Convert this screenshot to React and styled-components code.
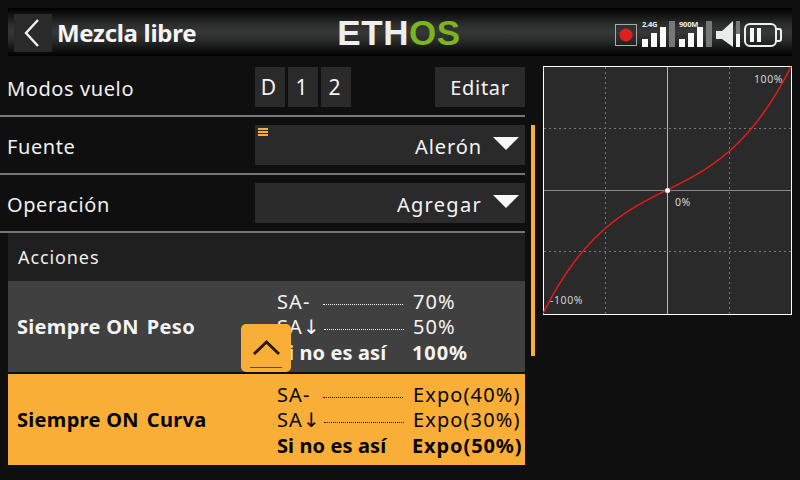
import React from "react";
import styled, { createGlobalStyle } from "styled-components";

const Global = createGlobalStyle`
  html, body { margin: 0; padding: 0; background: #0f0f0f; }
  body { width: 800px; height: 480px; overflow: hidden; font-family: "Noto Sans", "DejaVu Sans", sans-serif; }
`;
const Screen = styled.div`
  position: relative; width: 800px; height: 480px; background: #0f0f0f; color: #f4f4f4;
  display: flex; flex-direction: column; overflow: hidden; padding-top: 8px; box-sizing: border-box;
`;
const Header = styled.header`
  height: 48px; margin: 0 8px; display: grid; grid-template-columns: 1fr auto 1fr; align-items: center;
  background: linear-gradient(#000 0%, #0a0a0a 8%, #2c2e2e 35%, #363838 50%, #2c2e2e 65%, #0a0a0a 92%, #000 100%);
`;
const HeaderLeft = styled.div`display: flex; align-items: center; padding-left: 6px;`;
const BackButton = styled.div`
  width: 38px; height: 38px; background: #2a2a2a; display: flex; align-items: center; justify-content: center;
`;
const Title = styled.h1`
  margin: 0 0 0 5px; font-size: 24px; font-weight: 700; line-height: 38px; color: #f6f6f6; letter-spacing: -0.3px;
`;
const Logo = styled.div`
  font-family: "Liberation Sans", sans-serif; font-weight: 700; font-size: 35px; line-height: 48px; letter-spacing: 0.6px;
  color: #eeeeee; padding-top: 1px; margin-left: -2px;
  & > span { color: #7ab51d; }
`;
const Status = styled.div`justify-self: end; height: 48px;`;
const Main = styled.main`
  display: grid; grid-template-columns: 525px 10px 8px 249px; margin-top: 10px; flex: 1; min-height: 0;
`;
const Form = styled.section`display: flex; flex-direction: column; padding-top: 1px;`;
const Row = styled.div`
  height: 40px; display: grid; grid-template-columns: 255px 1fr; grid-template-rows: 40px; align-items: center; padding-bottom: 8px;
`;
const Label = styled.div`
  height: 40px; font-size: 20px; line-height: 44px; padding-left: 7px; letter-spacing: 0.6px; color: #f0f0f0;
`;
const Separator = styled.div`height: 2px; background: #777; margin-bottom: 8px;`;
const Controls = styled.div`display: flex; gap: 3px;`;
const Chip = styled.div`
  width: 30px; height: 40px; box-sizing: border-box; padding-right: 3px; background: #2a2a2a;
  display: flex; align-items: center; justify-content: center; font-size: 21px; color: #f4f4f4;
`;
const EditButton = styled.div`
  width: 90px; height: 40px; margin-left: auto; background: #2a2a2a; display: flex; align-items: center; justify-content: center;
  font-size: 20px; letter-spacing: 0.7px; color: #f4f4f4;
`;
const Select = styled.div`
  position: relative; height: 40px; box-sizing: border-box; padding: 2px 6px 0 0; background: #2a2a2a;
  display: flex; align-items: center; justify-content: flex-end; gap: 11px;
  font-size: 20px; letter-spacing: ${p => p.$spacing}; color: #f4f4f4;
`;
const Caret = styled.span`
  width: 0; height: 0; border-left: 13px solid transparent; border-right: 13px solid transparent;
  border-top: 13px solid #f8f8f8; margin-bottom: 6px;
`;
const MenuMark = styled.span`
  position: absolute; left: 3px; top: 3px; width: 10px; height: 8px;
  background: repeating-linear-gradient(#f9ae37 0 2px, transparent 2px 3px);
`;
const SectionTitle = styled.div`
  height: 48px; margin: -8px 0 0 8px; background: #1f1f1f; display: flex; align-items: center; padding-left: 10px;
  font-size: 18px; letter-spacing: 0.9px; color: #f0f0f0;
`;
const Action = styled.div`
  height: 91px; margin: 0 0 2px 8px; box-sizing: border-box;
  background: ${p => (p.$active ? "#f9ae37" : "#404040")};
  color: ${p => (p.$active ? "#050505" : "#f4f4f4")};
  display: grid; grid-template-columns: 260px 1fr; align-items: center; padding-left: 9px;
`;
const ActionName = styled.div`
  display: flex; gap: 8px; font-size: 20px; font-weight: 700; letter-spacing: 0.3px; white-space: nowrap;
`;
const Lines = styled.div`display: flex; flex-direction: column; padding-bottom: 1px;`;
const Line = styled.div`
  height: 25.5px; display: grid; grid-template-columns: 46px 80px 1fr; align-items: center; white-space: nowrap;
  font-size: 20px; letter-spacing: 1.1px;
`;
const Dots = styled.span`
  height: 6px; position: relative; left: ${p => (p.$shift ? "1px" : "0")};
  border-bottom: 1px dotted currentColor;
`;
const Value = styled.span`padding-left: 10px;`;
const BoldLine = styled.div`
  height: 25.5px; display: grid; grid-template-columns: 135px 1fr; align-items: center; white-space: nowrap;
  font-size: 20px; font-weight: 700; letter-spacing: 0.1px;
`;
const BoldValue = styled.span`letter-spacing: 0.9px;`;
const ScrollTrack = styled.div`padding-top: 59px; grid-column: 2; display: flex; justify-content: flex-end;`;
const ScrollThumb = styled.div`width: 4px; height: 231px; background: #f9ae37;`;
const Graph = styled.svg`grid-column: 4; display: block; width: 249px; height: 249px;`;
const GraphText = styled.text`font-family: "Noto Sans", sans-serif; font-size: 10.5px; fill: #d4d4d4; letter-spacing: 0.6px;`;
const UpButton = styled.div`
  position: absolute; left: 241px; top: 324px; width: 50px; height: 48px; border-radius: 5px; background: #f9ae37;
  display: flex; align-items: center; justify-content: center;
`;

const curve = () => {
  const pts = [];
  for (let i = 0; i <= 200; i++) {
    const x = -1 + i / 100;
    const y = 0.5 * x * x * x + 0.5 * x;
    pts.push(`${(124 + x * 124).toFixed(2)},${(124 - y * 123.5).toFixed(2)}`);
  }
  return pts.join(" ");
};

const Signal = ({ x, label }) => (
  <g>
    <text x={x} y={18} fontFamily="Noto Sans, sans-serif" fontSize="7.5" fontWeight="700" fill="#eee" letterSpacing="-0.2">{label}</text>
    <rect x={x} y={30} width={6} height={8} fill="#fafafa" />
    <rect x={x + 9} y={24} width={6} height={14} fill="#fafafa" />
    <rect x={x + 18} y={18} width={6} height={20} fill="#fafafa" />
    <rect x={x + 27} y={12} width={6} height={26} fill="#777" />
  </g>
);

export default function App() {
  return (
    <Screen>
      <Global />
      <Header>
        <HeaderLeft>
          <BackButton>
            <svg width="20" height="30" viewBox="0 0 20 30">
              <path d="M15 2 L3 15 L15 28" fill="none" stroke="#f2f2f2" strokeWidth="2.4" />
            </svg>
          </BackButton>
          <Title>Mezcla libre</Title>
        </HeaderLeft>
        <Logo>ETH<span>OS</span></Logo>
        <Status>
          <svg width="178" height="48" viewBox="614 0 178 48" style={{ display: "block" }}>
            <rect x="615.5" y="15.5" width="21" height="21" fill="none" stroke="#aaa" />
            <circle cx="626" cy="26" r="6.5" fill="#e21e1e" />
            <Signal x={642} label="2.4G" />
            <Signal x={679} label="900M" />
            <path d="M716 22 L722 22 L733 12 L733 38 L722 30 L716 30 Z" fill="#e8ece8" />
            <rect x="736" y="12" width="4" height="26" fill="#777" />
            <rect x="736" y="25" width="4" height="13" fill="#fafafa" />
            <rect x="745" y="15" width="31" height="22" rx="5" fill="none" stroke="#eee" strokeWidth="2" />
            <path d="M776 20 h3 a2 2 0 0 1 2 2 v8 a2 2 0 0 1 -2 2 h-3" fill="none" stroke="#eee" strokeWidth="2" />
            <rect x="750" y="19" width="4" height="14" fill="#f6f6f6" />
            <rect x="757" y="19" width="4" height="14" fill="#f6f6f6" />
          </svg>
        </Status>
      </Header>
      <Main>
        <Form>
          <Row>
            <Label>Modos vuelo</Label>
            <Controls>
              <Chip>D</Chip><Chip>1</Chip><Chip>2</Chip>
              <EditButton>Editar</EditButton>
            </Controls>
          </Row>
          <Separator />
          <Row>
            <Label>Fuente</Label>
            <Select $spacing="0.9px"><MenuMark />Alerón<Caret /></Select>
          </Row>
          <Separator />
          <Row>
            <Label>Operación</Label>
            <Select $spacing="1.3px">Agregar<Caret /></Select>
          </Row>
          <Separator />
          <SectionTitle>Acciones</SectionTitle>
          <Action>
            <ActionName><span>Siempre ON</span><span>Peso</span></ActionName>
            <Lines>
              <Line>SA-<Dots /><Value>70%</Value></Line>
              <Line>SA↓<Dots $shift /><Value>50%</Value></Line>
              <BoldLine>Si no es así<BoldValue>100%</BoldValue></BoldLine>
            </Lines>
          </Action>
          <Action $active>
            <ActionName><span>Siempre ON</span><span>Curva</span></ActionName>
            <Lines>
              <Line>SA-<Dots /><Value>Expo(40%)</Value></Line>
              <Line>SA↓<Dots $shift /><Value>Expo(30%)</Value></Line>
              <BoldLine>Si no es así<BoldValue>Expo(50%)</BoldValue></BoldLine>
            </Lines>
          </Action>
        </Form>
        <ScrollTrack><ScrollThumb /></ScrollTrack>
        <Graph viewBox="0 0 249 249">
          <rect x="0.5" y="0.5" width="248" height="248" fill="#2a2a2a" stroke="#fff" />
          <g stroke="#777" strokeDasharray="2 3">
            <line x1="62.5" y1="1" x2="62.5" y2="248" />
            <line x1="186.5" y1="1" x2="186.5" y2="248" />
            <line x1="1" y1="62.5" x2="248" y2="62.5" />
            <line x1="1" y1="185.5" x2="248" y2="185.5" />
          </g>
          <line x1="1" y1="124.5" x2="248" y2="124.5" stroke="#888" />
          <line x1="124.5" y1="1" x2="124.5" y2="248" stroke="#f9ae37" />
          <polyline points={curve()} fill="none" stroke="#f01818" strokeWidth="1.4" />
          <circle cx="124.5" cy="124.5" r="2.5" fill="#fff" />
          <GraphText x="211" y="17">100%</GraphText>
          <GraphText x="132" y="140">0%</GraphText>
          <GraphText x="7" y="238">-100%</GraphText>
        </Graph>
      </Main>
      <UpButton>
        <svg width="50" height="48" viewBox="0 0 50 48">
          <path d="M13 30 L25.500 18 L38 30" fill="none" stroke="#2a1a05" strokeWidth="3" />
          <line x1="9" y1="43.500" x2="41" y2="43.500" stroke="#6b4a12" />
        </svg>
      </UpButton>
    </Screen>
  );
}
